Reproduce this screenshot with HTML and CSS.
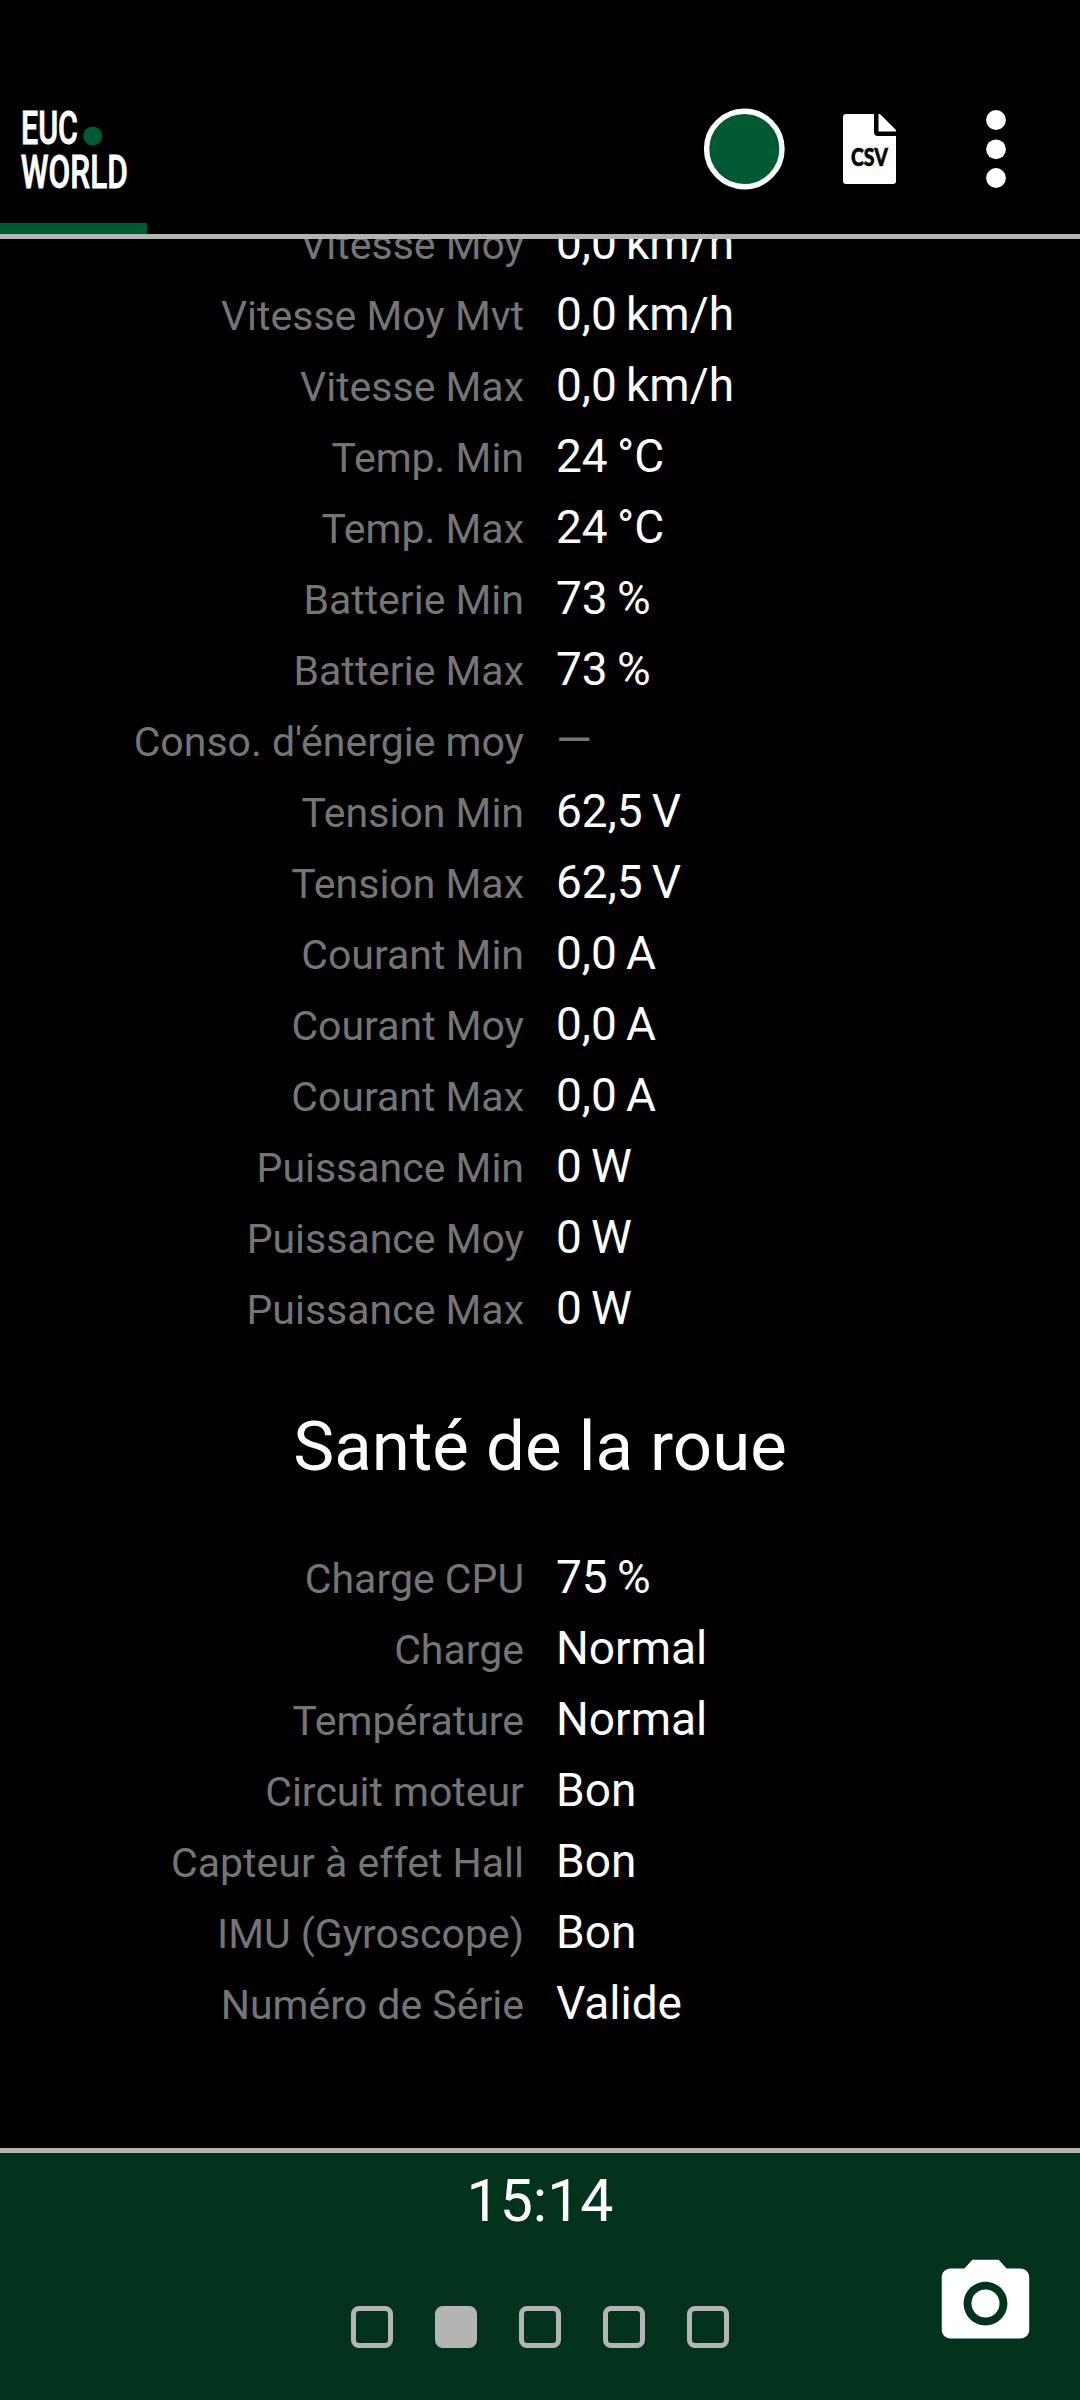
FILE: index.html
```html
<!DOCTYPE html>
<html lang="fr">
<head>
<meta charset="utf-8">
<title>EUC World</title>
<link rel="stylesheet" href="styles.css">
</head>
<body>
<div class="app">
  <header class="topbar">
    <div class="toolbar">
      <svg class="logo" width="130" height="115" viewBox="10 90 130 115" role="img" aria-label="EUC World">
        <text x="21" y="144" textLength="57" lengthAdjust="spacingAndGlyphs">EUC</text>
        <circle cx="92.7" cy="136" r="9.6"/>
        <text x="20.8" y="188.4" textLength="107" lengthAdjust="spacingAndGlyphs">WORLD</text>
      </svg>
      <div class="actions">
        <svg class="record" width="82" height="82" viewBox="0 0 82 82">
          <circle cx="41.3" cy="41" r="37.7"/>
        </svg>
        <svg class="csv" width="53" height="70" viewBox="0 0 53 70">
          <path fill="#fff" d="M3 0H31V18Q31 22 35 22H53V67Q53 70 50 70H3Q0 70 0 67V3Q0 0 3 0ZM35.5 0H37L53 16V17.5H35.5Z"/>
          <text x="8" y="52" textLength="37" lengthAdjust="spacingAndGlyphs">CSV</text>
        </svg>
        <svg class="more" width="20" height="78" viewBox="0 0 20 78" fill="#fff">
          <circle cx="10" cy="10" r="9.9"/><circle cx="10" cy="39.3" r="9.9"/><circle cx="10" cy="68" r="9.9"/>
        </svg>
      </div>
    </div>
    <div class="progress"></div>
  </header>

  <main class="content">
    <dl class="stats">
      <dt>Vitesse Moy</dt><dd>0,0&#8201;<span class="unit">km/h</span></dd>
      <dt>Vitesse Moy Mvt</dt><dd>0,0&#8201;<span class="unit">km/h</span></dd>
      <dt>Vitesse Max</dt><dd>0,0&#8201;<span class="unit">km/h</span></dd>
      <dt>Temp. Min</dt><dd>24&#8201;<span class="unit">°C</span></dd>
      <dt>Temp. Max</dt><dd>24&#8201;<span class="unit">°C</span></dd>
      <dt>Batterie Min</dt><dd>73&#8201;%</dd>
      <dt>Batterie Max</dt><dd>73&#8201;%</dd>
      <dt>Conso. d'énergie moy</dt><dd class="empty">—</dd>
      <dt>Tension Min</dt><dd>62,5&#8201;<span class="unit">V</span></dd>
      <dt>Tension Max</dt><dd>62,5&#8201;<span class="unit">V</span></dd>
      <dt>Courant Min</dt><dd>0,0&#8201;<span class="unit">A</span></dd>
      <dt>Courant Moy</dt><dd>0,0&#8201;<span class="unit">A</span></dd>
      <dt>Courant Max</dt><dd>0,0&#8201;<span class="unit">A</span></dd>
      <dt>Puissance Min</dt><dd>0&#8201;<span class="unit">W</span></dd>
      <dt>Puissance Moy</dt><dd>0&#8201;<span class="unit">W</span></dd>
      <dt>Puissance Max</dt><dd>0&#8201;<span class="unit">W</span></dd>
    </dl>
    <h2 class="section-title">Santé de la roue</h2>
    <dl class="stats">
      <dt>Charge CPU</dt><dd>75&#8201;%</dd>
      <dt>Charge</dt><dd>Normal</dd>
      <dt>Température</dt><dd>Normal</dd>
      <dt>Circuit moteur</dt><dd>Bon</dd>
      <dt>Capteur à effet Hall</dt><dd>Bon</dd>
      <dt>IMU (Gyroscope)</dt><dd>Bon</dd>
      <dt>Numéro de Série</dt><dd>Valide</dd>
    </dl>
  </main>

  <footer class="bottombar">
    <div class="clock">15:14</div>
    <nav class="pages">
      <span class="page"></span><span class="page active"></span><span class="page"></span><span class="page"></span><span class="page"></span>
    </nav>
    <svg class="camera" width="105" height="105" viewBox="0 0 24 24" fill="#fff">
      <circle cx="12" cy="12" r="3.2"/>
      <path d="M9 2 7.17 4H4c-1.1 0-2 .9-2 2v12c0 1.1.9 2 2 2h16c1.1 0 2-.9 2-2V6c0-1.1-.9-2-2-2h-3.17L15 2H9zm3 15c-2.76 0-5-2.24-5-5s2.24-5 5-5 5 2.24 5 5-2.24 5-5 5z"/>
    </svg>
  </footer>
</div>
</body>
</html>
```
FILE: styles.css
```css
* { box-sizing: border-box; }
body {
  margin: 0;
  background: #000;
  color: #fff;
  font-family: Roboto, sans-serif;
}
.app {
  display: flex;
  flex-direction: column;
  width: 1080px;
  height: 2400px;
  overflow: hidden;
}
.topbar {
  display: flex;
  flex-direction: column;
  flex: none;
  height: 239px;
  border-bottom: 5px solid #b4b4b4;
}
.toolbar {
  display: flex;
  flex: 1;
  justify-content: space-between;
  align-items: flex-start;
  padding: 90px 74px 0 10px;
}
.logo text {
  font-size: 47px;
  font-weight: 500;
  fill: #fff;
  stroke: #fff;
  stroke-width: 0.9px;
}
.logo circle { fill: #005a31; }
.actions {
  display: flex;
  align-items: center;
  height: 118px;
}
.record { margin-right: 58px; }
.record circle {
  fill: #005a31;
  stroke: #fff;
  stroke-width: 5.4px;
}
.csv { margin-right: 90px; }
.csv text {
  font-family: Lato, sans-serif;
  font-size: 25px;
  font-weight: 900;
  fill: #000;
  stroke: #000;
  stroke-width: 0.6px;
  stroke-linejoin: round;
}
.progress {
  width: 147px;
  height: 11px;
  background: #005a31;
}
.content {
  flex: 1;
  min-height: 0;
  overflow: hidden;
}
.stats {
  display: grid;
  grid-template-columns: 524px 1fr;
  grid-auto-rows: 71px;
  column-gap: 32px;
  align-items: baseline;
  margin: 0;
}
.stats:first-child { margin-top: -31px; }
.stats dt {
  font-size: 41px;
  line-height: 71px;
  color: #757575;
  text-align: right;
  white-space: nowrap;
}
.stats dd {
  margin: 0;
  font-size: 46px;
  line-height: 71px;
  white-space: nowrap;
}
.stats .empty { color: #757575; }
.unit { margin-left: 3.5px; }
.section-title {
  margin: 0;
  height: 198px;
  font-size: 69px;
  font-weight: 400;
  line-height: 205px;
  text-align: center;
}
.bottombar {
  position: relative;
  display: flex;
  flex-direction: column;
  align-items: center;
  flex: none;
  height: 252px;
  border-top: 5px solid #b4b4b4;
  background: #00321c;
}
.clock {
  height: 153px;
  padding-top: 13px;
  font-size: 59px;
  line-height: 69px;
}
.pages {
  display: flex;
  gap: 42px;
}
.page {
  width: 42px;
  height: 42px;
  border: 5px solid #b4b4b4;
  border-radius: 8px;
}
.page.active { background: #b4b4b4; }
.camera {
  position: absolute;
  right: 42px;
  top: 98px;
}
```
